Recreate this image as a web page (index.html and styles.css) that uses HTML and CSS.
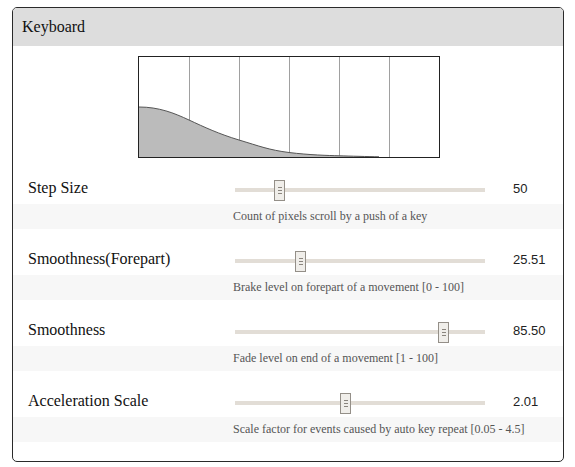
FILE: index.html
```html
<!DOCTYPE html>
<html>
<head>
<meta charset="utf-8">
<title>Keyboard</title>
<link rel="stylesheet" href="styles.css">
</head>
<body>
<div class="panel">
  <div class="panel-header">Keyboard</div>
  <div class="chart">
    <svg width="300" height="100" viewBox="0 0 300 100">
      <g stroke="#a0a0a0" stroke-width="1">
        <line x1="50.5" y1="0" x2="50.5" y2="100"/>
        <line x1="100.5" y1="0" x2="100.5" y2="100"/>
        <line x1="150.5" y1="0" x2="150.5" y2="100"/>
        <line x1="200.5" y1="0" x2="200.5" y2="100"/>
        <line x1="250.5" y1="0" x2="250.5" y2="100"/>
      </g>
      <path d="M0,50 C20,50 35,56 50,63 S80,77 100,83 S130,93 150,95.5 S190,98.5 200,98.8 S230,99.6 240,99.8 L240,100 L0,100 Z" fill="#bbbbbb"/>
      <path d="M0,50 C20,50 35,56 50,63 S80,77 100,83 S130,93 150,95.5 S190,98.5 200,98.8 S230,99.6 240,99.8" fill="none" stroke="#555" stroke-width="1"/>
    </svg>
  </div>

  <div class="row">
    <div class="row-main">
      <div class="label">Step Size</div>
      <div class="slider"><div class="track"></div><div class="thumb" style="left:39px"><i></i><i></i><i></i></div></div>
      <div class="value">50</div>
    </div>
    <div class="desc">Count of pixels scroll by a push of a key</div>
  </div>

  <div class="row">
    <div class="row-main">
      <div class="label">Smoothness(Forepart)</div>
      <div class="slider"><div class="track"></div><div class="thumb" style="left:60px"><i></i><i></i><i></i></div></div>
      <div class="value">25.51</div>
    </div>
    <div class="desc">Brake level on forepart of a movement [0 - 100]</div>
  </div>

  <div class="row">
    <div class="row-main">
      <div class="label">Smoothness</div>
      <div class="slider"><div class="track"></div><div class="thumb" style="left:203px"><i></i><i></i><i></i></div></div>
      <div class="value">85.50</div>
    </div>
    <div class="desc">Fade level on end of a movement [1 - 100]</div>
  </div>

  <div class="row">
    <div class="row-main">
      <div class="label">Acceleration Scale</div>
      <div class="slider"><div class="track"></div><div class="thumb" style="left:105px"><i></i><i></i><i></i></div></div>
      <div class="value">2.01</div>
    </div>
    <div class="desc">Scale factor for events caused by auto key repeat [0.05 - 4.5]</div>
  </div>
</div>
</body>
</html>
```

FILE: styles.css
```css
html, body {
  margin: 0;
  padding: 0;
  background: #ffffff;
}

body {
  padding: 7px 0 0 12px;
  font-family: "Liberation Serif", "Times New Roman", serif;
  color: #111;
}

.panel {
  width: 550px;
  height: 453px;
  border: 1px solid #2a2a2a;
  border-radius: 5px;
  overflow: hidden;
  background: #fff;
}

.panel-header {
  height: 38px;
  line-height: 38px;
  background: #dddddd;
  padding-left: 9px;
  font-size: 16px;
  color: #111;
}

.chart {
  margin: 10px 0 0 125px;
  width: 300px;
  height: 100px;
  border: 1px solid #222;
}

.chart svg {
  display: block;
}

.row-main {
  height: 46px;
  display: grid;
  grid-template-columns: 222px 250px 1fr;
}

.label {
  padding: 21px 0 0 15px;
  font-size: 16px;
  line-height: 18px;
  color: #111;
  white-space: nowrap;
}

.slider {
  position: relative;
}

.track {
  margin-top: 30px;
  height: 4px;
  background: #e2ddd6;
}

.thumb {
  position: absolute;
  top: 22px;
  width: 9px;
  height: 19px;
  border: 1px solid #948f88;
  background: #f0eeea;
  display: flex;
  flex-direction: column;
  align-items: center;
  justify-content: center;
  gap: 2px;
}

.thumb i {
  display: block;
  width: 4px;
  height: 1px;
  background: #8a857e;
}

.value {
  padding: 23px 0 0 28px;
  font-family: "Liberation Sans", Arial, sans-serif;
  font-size: 13px;
  line-height: 15px;
  color: #222;
}

.desc {
  height: 25px;
  line-height: 24px;
  background: #f7f7f7;
  padding-left: 220px;
  font-size: 12px;
  color: #555;
  white-space: nowrap;
}
```
